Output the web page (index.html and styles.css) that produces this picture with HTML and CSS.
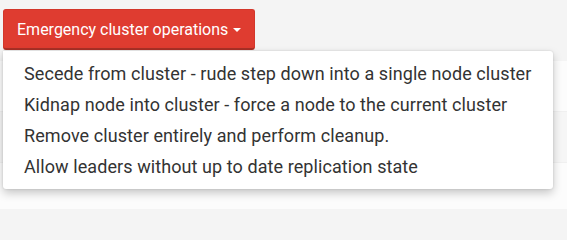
FILE: index.html
```html
<!DOCTYPE html>
<html>
<head>
<meta charset="utf-8">
<link rel="stylesheet" href="styles.css">
</head>
<body>
<div class="page">
  <div class="btn-group">
    <button class="btn-danger">Emergency cluster operations <span class="caret"></span></button>
    <ul class="dropdown-menu">
      <li><a>Secede from cluster - rude step down into a single node cluster</a></li>
      <li><a>Kidnap node into cluster - force a node to the current cluster</a></li>
      <li><a>Remove cluster entirely and perform cleanup.</a></li>
      <li><a>Allow leaders without up to date replication state</a></li>
    </ul>
  </div>
  <div class="table">
    <div class="row"></div>
    <div class="row alt"></div>
    <div class="row"></div>
  </div>
</div>
</body>
</html>
```

FILE: styles.css
```css
html, body {
  margin: 0;
  padding: 0;
  background: #f4f4f4;
  font-family: Roboto, "Liberation Sans", sans-serif;
}
html {
  height: 209px;
  overflow: hidden;
}
.page {
  position: relative;
  width: 567px;
  height: 209px;
  overflow: hidden;
}
.btn-group {
  position: relative;
  padding: 9px 0 0 3px;
  z-index: 2;
}
.btn-danger {
  display: block;
  height: 41px;
  box-sizing: border-box;
  padding: 0 13px 0 13px;
  background: #df3c30;
  color: #fff;
  border: 1px solid #d3372b;
  border-bottom: 2px solid #a93026;
  border-radius: 3px;
  font-family: Roboto, "Liberation Sans", sans-serif;
  font-size: 16px;
  line-height: 37px;
  cursor: pointer;
}
.caret {
  display: inline-block;
  width: 0;
  height: 0;
  margin-left: 1px;
  vertical-align: middle;
  border-top: 4px solid #fff;
  border-left: 4px solid transparent;
  border-right: 4px solid transparent;
}
.dropdown-menu {
  position: absolute;
  top: 51px;
  left: 3px;
  width: 550px;
  box-sizing: border-box;
  margin: 0;
  padding: 7px 0 7px 0;
  list-style: none;
  background: #fff;
  border-radius: 0 3px 3px 3px;
  box-shadow: 0 4px 10px rgba(0,0,0,0.22), 0 0 2px rgba(0,0,0,0.15);
}
.dropdown-menu li a {
  display: block;
  padding: 0 0 0 21px;
  height: 31px;
  line-height: 31px;
  font-size: 18px;
  letter-spacing: 0.08px;
  color: #333;
  white-space: nowrap;
}
.table {
  position: absolute;
  top: 61px;
  left: 0;
  width: 567px;
  background: #fff;
  z-index: 1;
}
.row {
  height: 50px;
  border-bottom: 1px solid #f0f0f0;
  background: #fcfcfc;
}
.row.alt {
  background: #f6f6f6;
}
```
